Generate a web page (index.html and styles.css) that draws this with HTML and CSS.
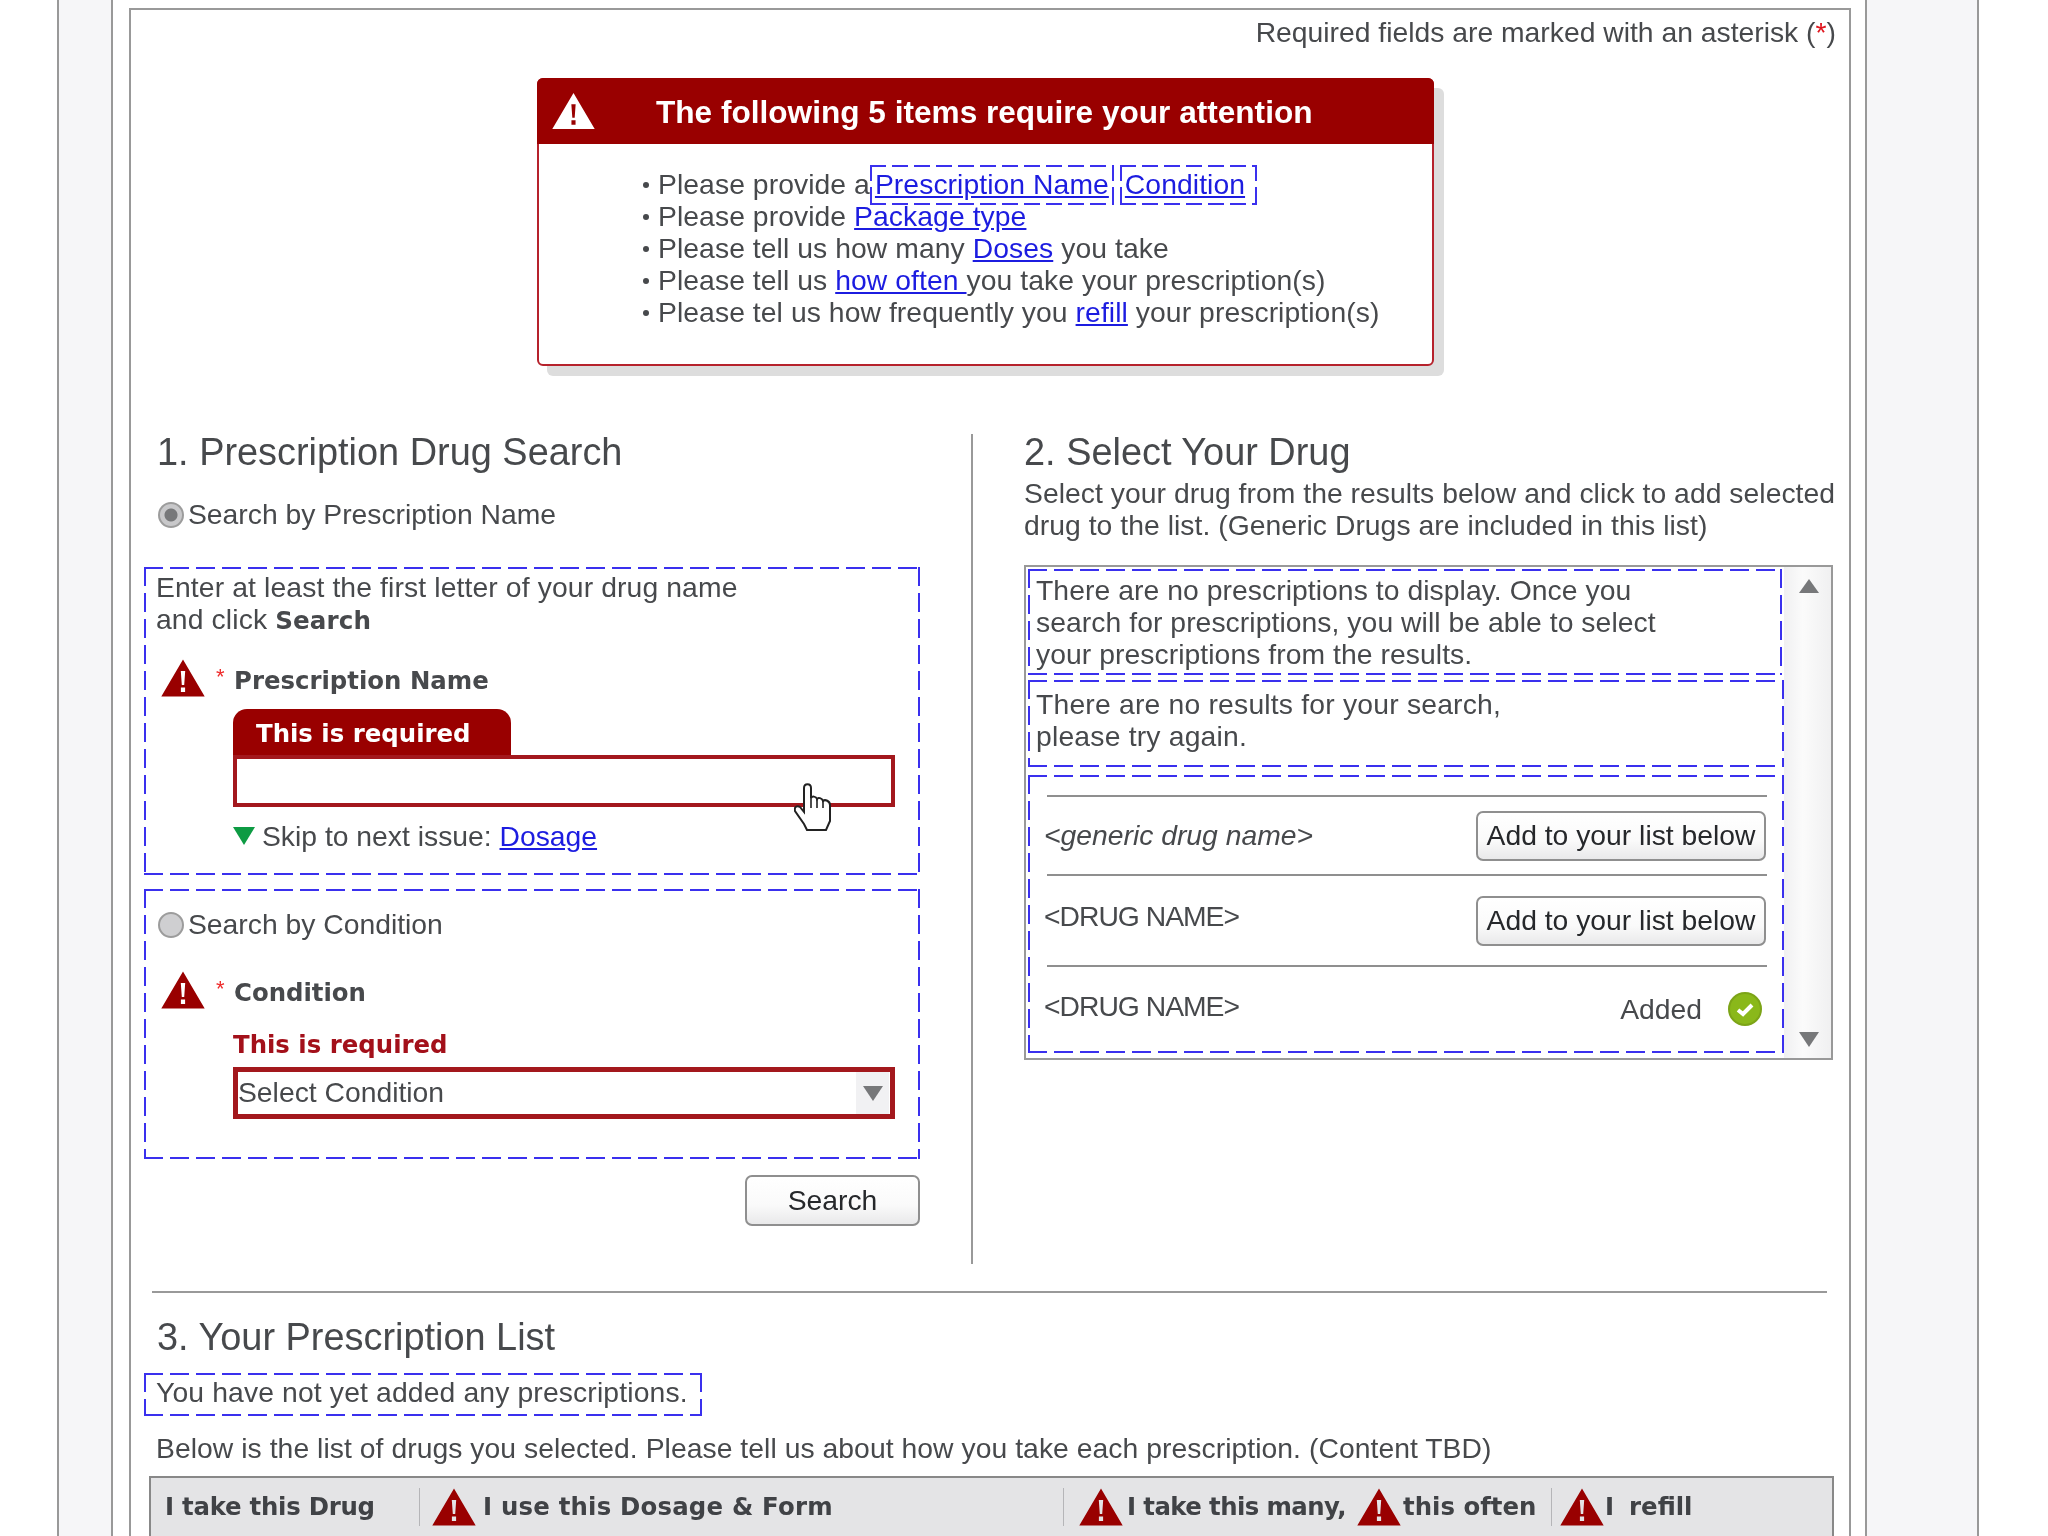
FILE: index.html
```html
<!DOCTYPE html>
<html lang="en">
<head>
    <meta charset="UTF-8">
    <meta name="viewport" content="width=device-width, initial-scale=1.0">
    <title>Prescription Drug Search</title>
    <link rel="stylesheet" href="styles.css">
</head>
<body>
    <svg class="sprites" width="0" height="0">
        <symbol id="warn" viewBox="0 0 44 38">
            <path fill="currentColor" fill-rule="evenodd" d="M22 .5 43.7 37.5H.3ZM19.8 12H24.2L23.2 26H20.8ZM19.9 28.5H24.1V33H19.9Z"/>
        </symbol>
    </svg>
    <div class="shell">
        <div class="page">
            <div class="form">
                <p class="required-note">Required fields are marked with an asterisk (<span class="star">*</span>)</p>

                <div class="alert">
                    <div class="alert-head">
                        <svg class="alert-icon"><use href="#warn"/></svg>
                        <span>The following 5 items require your attention</span>
                    </div>
                    <ul class="alert-list">
                        <li>Please provide a<span class="dash dash-inline"><a href="#">Prescription Name</a></span><span class="dash dash-inline dash-next"><a href="#">Condition</a></span></li>
                        <li>Please provide <a href="#">Package type</a></li>
                        <li>Please tell us how many <a href="#">Doses</a> you take</li>
                        <li>Please tell us <a href="#">how often </a>you take your prescription(s)</li>
                        <li>Please tel us how frequently you <a href="#">refill</a> your prescription(s)</li>
                    </ul>
                </div>

                <div class="cols">
                    <div class="col-left">
                        <h2 class="section-title">1. Prescription Drug Search</h2>
                        <label class="radio-row radio-first"><span class="radio radio-on"></span>Search by Prescription Name</label>

                        <div class="dash box-name">
                            <p class="box-intro">Enter at least the first letter of your drug name<br>and click <b class="strong">Search</b></p>
                            <div class="field-head field-head-name">
                                <svg class="warn-icon"><use href="#warn"/></svg>
                                <span class="field-star">*</span>
                                <span class="field-label">Prescription Name</span>
                            </div>
                            <div class="field-body">
                                <div class="error-tab">This is required</div>
                                <div class="text-input"></div>
                                <div class="skip"><span class="skip-arrow"></span>Skip to next issue: <a href="#">Dosage</a></div>
                            </div>
                            <svg class="hand" viewBox="0 0 38 49" width="38" height="49">
                                <path fill="#fff" stroke="#222" stroke-width="2" d="M10 5C10 0 17 0 17 5V15C18 13 22 13 23 16 24 14 28 15 29 18 31 16 36 18 36 22V38L32 47H13L10 41 1 28C0 24 3 22 6 24L10 29Z"/>
                                <path fill="none" stroke="#222" stroke-width="1.6" d="M17 15V25M23 16V25M29 18V25"/>
                            </svg>
                        </div>

                        <div class="dash box-condition">
                            <label class="radio-row"><span class="radio"></span>Search by Condition</label>
                            <div class="field-head field-head-cond">
                                <svg class="warn-icon"><use href="#warn"/></svg>
                                <span class="field-star">*</span>
                                <span class="field-label">Condition</span>
                            </div>
                            <div class="field-body">
                                <div class="error-text">This is required</div>
                                <div class="select-input">
                                    <span class="select-text">Select Condition</span>
                                    <span class="select-btn"><span class="arrow-down"></span></span>
                                </div>
                            </div>
                        </div>

                        <button class="btn btn-search">Search</button>
                    </div>

                    <div class="col-right">
                        <h2 class="section-title">2. Select Your Drug</h2>
                        <p class="intro">Select your drug from the results below and click to add selected<br>drug to the list. (Generic Drugs are included in this list)</p>

                        <div class="results">
                            <div class="results-inner">
                                <div class="dash msg msg-empty">There are no prescriptions to display. Once you<br>search for prescriptions, you will be able to select<br>your prescriptions from the results.</div>
                                <div class="dash msg msg-none">There are no results for your search,<br>please try again.</div>
                                <div class="dash drug-box">
                                    <div class="drug-row drug-row-a">
                                        <em>&lt;generic drug name&gt;</em>
                                        <button class="btn btn-add">Add to your list below</button>
                                    </div>
                                    <div class="drug-row drug-row-b">
                                        <span class="drug-name">&lt;DRUG NAME&gt;</span>
                                        <button class="btn btn-add">Add to your list below</button>
                                    </div>
                                    <div class="drug-row drug-row-c">
                                        <span class="drug-name">&lt;DRUG NAME&gt;</span>
                                        <span class="added">Added
                                            <svg class="check" viewBox="0 0 34 34" width="34" height="34">
                                                <circle cx="17" cy="17" r="16" fill="#8ab81a" stroke="#7ca417" stroke-width="2"/>
                                                <path fill="none" stroke="#fff" stroke-width="4" d="M10 18 15 22 24 13"/>
                                            </svg>
                                        </span>
                                    </div>
                                </div>
                            </div>
                            <div class="scrollbar">
                                <span class="scroll-btn"><span class="arrow-up"></span></span>
                                <span class="scroll-btn"><span class="arrow-down"></span></span>
                            </div>
                        </div>
                    </div>
                </div>

                <div class="rule"></div>

                <h2 class="section-title list-title">3. Your Prescription List</h2>
                <div class="dash empty-note">You have not yet added any prescriptions.</div>
                <p class="list-intro">Below is the list of drugs you selected. Please tell us about how you take each prescription. (Content TBD)</p>

                <div class="list-head">
                    <div class="head-cell cell-drug">I take this Drug</div>
                    <div class="head-cell cell-dosage">
                        <svg class="warn-icon"><use href="#warn"/></svg>
                        <span>I use this Dosage &amp; Form</span>
                    </div>
                    <div class="head-cell cell-often">
                        <svg class="warn-icon"><use href="#warn"/></svg>
                        <span class="many-text">I take this many,</span>
                        <svg class="warn-icon warn-mid"><use href="#warn"/></svg>
                        <span class="often-text">this often</span>
                    </div>
                    <div class="head-cell cell-refill">
                        <svg class="warn-icon"><use href="#warn"/></svg>
                        <span class="refill-text">I&nbsp; refill</span>
                    </div>
                </div>
            </div>
        </div>
    </div>
</body>
</html>
```

FILE: styles.css
```css
* {
    box-sizing: border-box;
}
html, body {
    height: 1536px;
    overflow: hidden;
}
body {
    margin: 0;
    background: #fff;
    font-family: "Liberation Sans", Arial, sans-serif;
    font-size: 28.3px;
    line-height: 32px;
    color: #47494c;
}
p {
    margin: 0;
}
a {
    color: #1c1ce0;
    text-decoration: underline;
}
.sprites {
    display: block;
    position: absolute;
}

/* page frame */
.shell {
    margin-left: 57px;
    width: 1922px;
    height: 1536px;
    padding: 0 110px 0 52px;
    background: #f6f6f8;
    border-left: 2px solid #999;
    border-right: 2px solid #999;
    filter: blur(.45px);
}
.page {
    height: 1536px;
    padding: 0 14px 0 16px;
    background: #fff;
    border-left: 2px solid #999;
    border-right: 2px solid #999;
}
.form {
    margin-top: 0;
    position: relative;
    top: 8px;
    height: 1528px;
    border: 2px solid #999;
    border-bottom: 0;
}
.required-note {
    padding: 6px 13px 1px 0;
    text-align: right;
}
.star {
    color: #e0141c;
}

/* dashed annotation outline */
.dash {
    background-image:
        repeating-linear-gradient(90deg, #3a30ee 0 19px, transparent 19px 26px),
        repeating-linear-gradient(90deg, #3a30ee 0 19px, transparent 19px 26px),
        repeating-linear-gradient(180deg, #3a30ee 0 19px, transparent 19px 26px),
        repeating-linear-gradient(180deg, #3a30ee 0 19px, transparent 19px 26px);
    background-size: 100% 2px, 100% 2px, 2px 100%, 2px 100%;
    background-position: 0 0, 0 100%, 0 0, 100% 0;
    background-repeat: no-repeat;
}
.dash-inline {
    padding: 3px 5px 5px;
    background-image:
        repeating-linear-gradient(90deg, #3a30ee 0 16px, transparent 16px 22px),
        repeating-linear-gradient(90deg, #3a30ee 0 16px, transparent 16px 22px),
        repeating-linear-gradient(180deg, #3a30ee 0 16px, transparent 16px 22px),
        repeating-linear-gradient(180deg, #3a30ee 0 16px, transparent 16px 22px);
}
.dash-next {
    margin-left: 6px;
    padding-right: 12px;
}

/* alert */
.alert {
    margin: 29px 0 0 406px;
    width: 897px;
    height: 288px;
    border: 2px solid #b6222c;
    border-radius: 6px;
    box-shadow: 10px 10px 0 #dddddd;
    background: #fff;
}
.alert-head {
    display: flex;
    align-items: center;
    height: 66px;
    margin: -2px -2px 0;
    padding-left: 15px;
    background: #990000;
    border-radius: 6px 6px 0 0;
    color: #fff;
    font-size: 31.6px;
    font-weight: bold;
}
.alert-head span {
    padding-top: 2px;
}
.alert-icon {
    width: 43px;
    height: 38px;
    margin-right: 61px;
    color: #fff;
}
.alert-list {
    margin: 0;
    padding: 24px 0 0 104px;
    list-style: none;
}
.alert-list li {
    height: 32px;
    position: relative;
    padding-left: 15px;
    white-space: nowrap;
    letter-spacing: .07px;
}
.alert-list li::before {
    content: "";
    position: absolute;
    left: 0;
    top: 14px;
    width: 6px;
    height: 6px;
    border-radius: 50%;
    background: #47494c;
}

/* two columns */
.cols {
    display: flex;
    margin-top: 68px;
    height: 830px;
}
.col-left {
    display: flex;
    flex-direction: column;
    width: 842px;
    padding: 0 51px 0 13px;
    border-right: 2px solid #999;
}
.col-right {
    flex: 1;
    padding-left: 50px;
}
.section-title {
    margin: 0;
    font-size: 37.9px;
    font-weight: normal;
    line-height: 36px;
    color: #47494c;
}
.col-left > .section-title {
    padding-left: 13px;
}
.col-right > .section-title {
    padding-left: 1px;
}
.radio-row {
    display: flex;
    align-items: center;
    height: 32px;
    padding-bottom: 2px;
}
.radio-first {
    margin: 29px 0 0 14px;
}
.radio {
    flex: none;
    width: 26px;
    height: 26px;
    margin: 2px 4px 0 0;
    border-radius: 50%;
    background: #cfcfd1;
    border: 2px solid #9c9c9c;
}
.radio-on {
    background: radial-gradient(circle, #77787a 0 6px, #c8c8ca 7px);
}

/* search boxes */
.box-name {
    position: relative;
    margin-top: 36px;
    height: 308px;
    padding: 4px 13px 0;
}
.box-intro {
    margin-left: -1px;
    letter-spacing: .12px;
}
.box-condition {
    margin-top: 14px;
    height: 270px;
    padding: 20px 13px 0;
}
.box-condition .radio-row {
    margin-left: 1px;
}
.strong {
    font-family: "DejaVu Sans", sans-serif;
    font-size: 24.6px;
    line-height: 1;
}
.field-head {
    display: flex;
    align-items: center;
    height: 38px;
    padding-left: 4px;
}
.field-head-name {
    margin-top: 24px;
}
.field-head-cond {
    margin-top: 30px;
}
.warn-icon {
    flex: none;
    width: 44px;
    height: 38px;
    color: #990000;
}
.field-star {
    width: 18px;
    margin: -2px 0 0 11px;
    color: #ee2a2a;
    font-size: 22px;
}
.field-label, .error-tab, .error-text, .head-cell {
    font-family: "DejaVu Sans", sans-serif;
    font-weight: bold;
    font-size: 24.4px;
}
.field-label {
    padding-top: 5px;
}
.field-body {
    margin-left: 76px;
    width: 662px;
}
.error-tab {
    width: 278px;
    height: 47px;
    margin-top: 12px;
    padding: 9px 0 0 23px;
    background: #990000;
    border-radius: 14px 14px 0 0;
    color: #fff;
}
.text-input {
    height: 52px;
    background: #fff;
    border: 4px solid #a3181d;
    margin-top: -1px;
}
.skip {
    display: flex;
    align-items: center;
    height: 32px;
    margin-top: 13px;
    white-space: pre;
}
.skip-arrow {
    width: 0;
    height: 0;
    margin-right: 7px;
    border-left: 11px solid transparent;
    border-right: 11px solid transparent;
    border-top: 18px solid #0d9b43;
}
.hand {
    position: absolute;
    left: 650px;
    top: 216px;
}
.error-text {
    margin-top: 20px;
    color: #a3101a;
}
.select-input {
    display: flex;
    align-items: center;
    justify-content: space-between;
    height: 52px;
    margin-top: 6px;
    border: 5px solid #a3181d;
    background: #fff;
}
.select-text {
    padding-bottom: 3px;
}
.select-btn {
    display: flex;
    align-items: center;
    justify-content: center;
    width: 33px;
    height: 42px;
    margin-right: 1px;
    background: #f1f1f3;
}
.arrow-down, .arrow-up {
    width: 0;
    height: 0;
    border-left: 10px solid transparent;
    border-right: 10px solid transparent;
}
.arrow-down {
    border-top: 15px solid #77787a;
}
.arrow-up {
    border-bottom: 14px solid #77787a;
}
.btn {
    font: inherit;
    color: #26282b;
    border: 2px solid #8f8f8f;
    border-radius: 7px;
    background: linear-gradient(#fff, #fafafa 60%, #e9e9ea);
    padding: 0 0 2px;
    white-space: nowrap;
}
.btn-search {
    align-self: flex-end;
    width: 175px;
    height: 51px;
    margin-top: 16px;
}

/* results list */
.intro {
    margin-top: 7px;
    padding-left: 1px;
    white-space: nowrap;
    letter-spacing: .04px;
}
.results {
    display: flex;
    width: 809px;
    height: 495px;
    margin: 24px 0 0 1px;
    border: 2px solid #999;
}
.results-inner {
    flex: 1;
    padding: 2px 0 0 2px;
}
.msg-empty {
    width: 754px;
    height: 106px;
    padding: 5px 0 0 8px;
    letter-spacing: .06px;
}
.msg-none {
    width: 756px;
    height: 87px;
    margin-top: 5px;
    padding: 8px 0 0 8px;
    letter-spacing: .2px;
}
.drug-box {
    width: 756px;
    height: 278px;
    margin-top: 8px;
    padding: 20px 0 0 19px;
}
.drug-row {
    display: flex;
    align-items: center;
    justify-content: space-between;
    width: 720px;
    padding-right: 1px;
    border-top: 2px solid #8f8f8f;
}
.drug-row em, .drug-name {
    margin-left: -3px;
}
.drug-name {
    letter-spacing: -1px;
}
.drug-row-a {
    height: 79px;
}
.drug-row-a em {
    margin-bottom: 2px;
}
.drug-row-b {
    height: 91px;
}
.drug-row-b .drug-name {
    margin-bottom: 10px;
}
.drug-row-c {
    height: 86px;
    padding-right: 5px;
}
.drug-row-c .drug-name {
    margin-bottom: 6px;
}
.added {
    display: flex;
    align-items: center;
    gap: 26px;
}
.btn-add {
    width: 290px;
    height: 50px;
}
.scrollbar {
    display: flex;
    flex-direction: column;
    justify-content: space-between;
    width: 47px;
    padding-left: 2px;
    background: linear-gradient(90deg, #f0f0f1, #fbfbfb 40%, #f0f0f1);
}
.scroll-btn {
    display: flex;
    align-items: center;
    justify-content: center;
    height: 38px;
}

/* prescription list */
.rule {
    height: 2px;
    margin: 27px 22px 0 21px;
    background: #999;
}
.list-title {
    margin-top: 26px;
    padding-left: 26px;
}
.empty-note {
    width: 558px;
    height: 43px;
    margin: 18px 0 0 13px;
    padding: 3px 12px 0;
    white-space: nowrap;
    letter-spacing: .14px;
}
.list-intro {
    margin-top: 16px;
    padding-left: 25px;
    letter-spacing: .05px;
}
.list-head {
    display: flex;
    width: 1685px;
    height: 62px;
    margin: 12px 0 0 18px;
    background: #e4e4e6;
    border: 2px solid #888;
}
.head-cell {
    display: flex;
    align-items: center;
    margin: 10px 0 0;
    height: 38px;
    color: #404246;
}
.head-cell + .head-cell {
    border-left: 1px solid #b5b5b8;
}
.cell-drug {
    width: 268px;
    padding-left: 14px;
    letter-spacing: -.25px;
}
.cell-dosage {
    width: 644px;
    padding-left: 12px;
    letter-spacing: .2px;
}
.cell-dosage span {
    margin-left: 7px;
}
.cell-often {
    width: 488px;
    padding-left: 15px;
}
.many-text {
    margin-left: 4px;
    letter-spacing: -.6px;
}
.often-text {
    margin-left: 2px;
}
.warn-mid {
    margin-left: 11px;
}
.cell-refill {
    padding-left: 8px;
}
.refill-text {
    margin-left: 1px;
    word-spacing: -1px;
}
```
